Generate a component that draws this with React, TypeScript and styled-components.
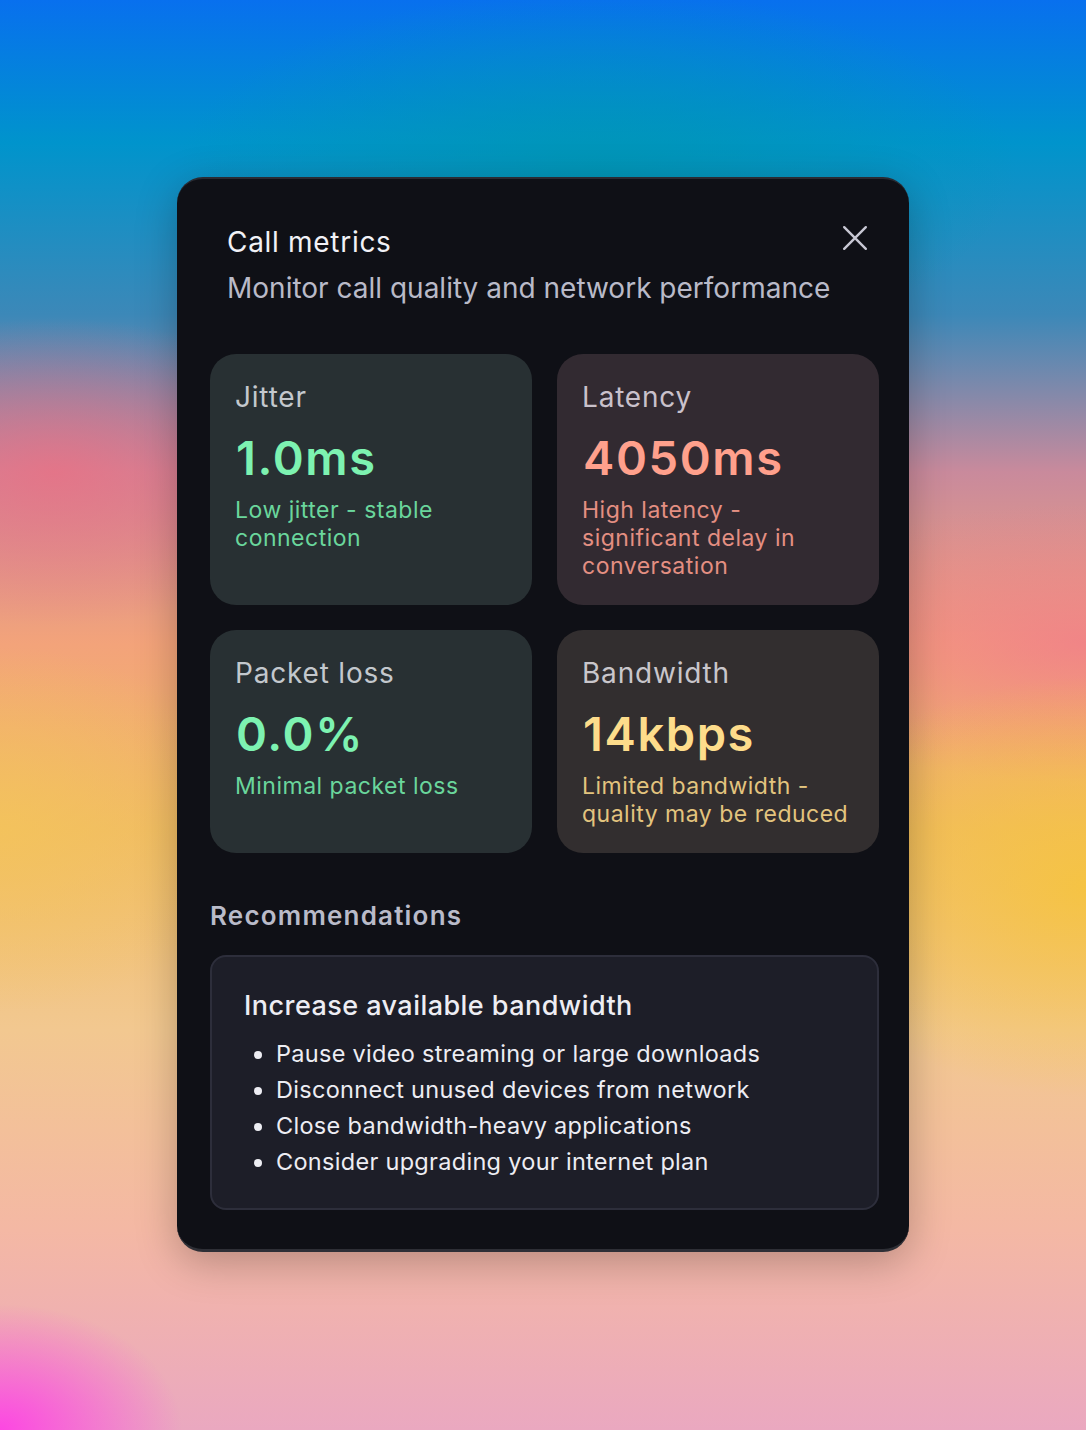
import styled, { createGlobalStyle } from "styled-components"

const GlobalStyle = createGlobalStyle`
    html, body {
        margin: 0;
        padding: 0;
    }
    body {
        font-family: Inter, "Noto Sans", "Liberation Sans", sans-serif;
        -webkit-font-smoothing: antialiased;
    }
`

type Tone = 'good' | 'bad' | 'warn'

const tones: Record<Tone, { bg: string, value: string, text: string, label: string }> = {
    good: { bg: "#283033", value: "#7df2b1", text: "#6ad69c", label: "#c3c8cd" },
    bad: { bg: "#322a31", value: "#ffa08c", text: "#e48f82", label: "#c9c1cb" },
    warn: { bg: "#322e2f", value: "#fddc8b", text: "#e3c47e", label: "#c9c6cb" },
}

const Backdrop = styled.div`
    width: 1086px;
    height: 1430px;
    display: flex;
    align-items: flex-start;
    justify-content: center;
    padding-top: 177px;
    box-sizing: border-box;
    background:
        radial-gradient(ellipse 260px 180px at 0% 100%, rgba(255, 60, 230, 0.9), transparent 70%),
        radial-gradient(ellipse 420px 300px at 100% 62%, rgba(246, 196, 60, 0.85), transparent 70%),
        radial-gradient(ellipse 360px 260px at 0% 58%, rgba(244, 196, 90, 0.8), transparent 70%),
        radial-gradient(ellipse 400px 220px at 5% 33%, rgba(236, 110, 130, 0.75), transparent 70%),
        radial-gradient(ellipse 500px 200px at 100% 45%, rgba(240, 120, 140, 0.7), transparent 70%),
        radial-gradient(ellipse 600px 260px at 55% 12%, rgba(0, 150, 180, 0.85), transparent 70%),
        linear-gradient(180deg, #0870ee 0%, #0094cc 10%, #3c88b8 22%, #c98a9c 33%, #f3a37a 45%, #f0bb66 58%, #f2c890 72%, #f4b8a4 86%, #eaa8c0 100%);
`

const Dialog = styled.div`
    width: 732px;
    background: #0f1016;
    border-radius: 26px;
    border-top: 2px solid #2a2b33;
    border-bottom: 3px solid #2e2f36;
    box-shadow: 0 10px 40px rgba(0, 0, 0, 0.25);
    padding: 0 30px 39px 33px;
    box-sizing: border-box;
    display: flex;
    flex-direction: column;
`

const Header = styled.div`
    display: flex;
    justify-content: space-between;
    align-items: flex-start;
    padding: 44px 0 0 17px;
    height: 175px;
    box-sizing: border-box;
`

const HeaderText = styled.div`
    display: flex;
    flex-direction: column;
    gap: 8px;
`

const Title = styled.h2`
    margin: 0;
    font-size: 28px;
    line-height: 38px;
    font-weight: 400;
    letter-spacing: 0.7px;
    color: #f1f1f6;
`

const Subtitle = styled.p`
    margin: 0;
    font-size: 28px;
    line-height: 38px;
    font-weight: 400;
    color: #b9bac8;
`

const CloseButton = styled.button`
    background: none;
    border: none;
    padding: 0;
    margin: 0 9px 0 0;
    width: 30px;
    height: 30px;
    color: #c8c8d4;
    display: flex;
    align-items: center;
    justify-content: center;
    cursor: pointer;
`

const Grid = styled.div`
    display: grid;
    grid-template-columns: 322px 322px;
    column-gap: 25px;
    row-gap: 25px;
`

const Card = styled.div<{ tone: Tone }>`
    background: ${p => tones[p.tone].bg};
    border-radius: 26px;
    padding: 25px 24px 24px 25px;
    display: flex;
    flex-direction: column;
    min-height: 251px;
    box-sizing: border-box;
    &:nth-child(n+3) {
        min-height: 223px;
    }
`

const Label = styled.div<{ tone: Tone }>`
    font-size: 28px;
    line-height: 36px;
    letter-spacing: 0.8px;
    color: ${p => tones[p.tone].label};
`

const Value = styled.div<{ tone: Tone }>`
    margin-top: 15px;
    font-size: 47px;
    line-height: 56px;
    font-weight: 600;
    letter-spacing: 1.6px;
    padding-left: 1px;
    color: ${p => tones[p.tone].value};
`

const Desc = styled.div<{ tone: Tone }>`
    margin-top: 10px;
    font-size: 23px;
    line-height: 28px;
    letter-spacing: 0.5px;
    color: ${p => tones[p.tone].text};
`

const SectionTitle = styled.h3`
    margin: 46px 0 22px 0;
    font-size: 26px;
    line-height: 34px;
    font-weight: 600;
    letter-spacing: 1.2px;
    color: #b9bbc9;
`

const RecBox = styled.div`
    background: #1d1e28;
    border: 2px solid #2d2e3b;
    border-radius: 16px;
    padding: 31px 32px 28px 32px;
`

const RecTitle = styled.div`
    font-size: 27px;
    line-height: 36px;
    font-weight: 500;
    letter-spacing: 0.45px;
    color: #ededf3;
    margin-bottom: 12px;
`

const List = styled.ul`
    margin: 0;
    padding: 0 0 0 32px;
    list-style: disc;
`

const Item = styled.li`
    font-size: 23.5px;
    line-height: 36px;
    letter-spacing: 0.3px;
    color: #ededf3;
`

const metrics: { label: string, value: string, desc: string, tone: Tone }[] = [
    { label: "Jitter", value: "1.0ms", desc: "Low jitter - stable connection", tone: "good" },
    { label: "Latency", value: "4050ms", desc: "High latency - significant delay in conversation", tone: "bad" },
    { label: "Packet loss", value: "0.0%", desc: "Minimal packet loss", tone: "good" },
    { label: "Bandwidth", value: "14kbps", desc: "Limited bandwidth - quality may be reduced", tone: "warn" },
]

const tips = [
    "Pause video streaming or large downloads",
    "Disconnect unused devices from network",
    "Close bandwidth-heavy applications",
    "Consider upgrading your internet plan",
]

export default function App(): JSX.Element {
    return (
        <>
            <GlobalStyle />
            <Backdrop>
                <Dialog>
                    <Header>
                        <HeaderText>
                            <Title>Call metrics</Title>
                            <Subtitle>Monitor call quality and network performance</Subtitle>
                        </HeaderText>
                        <CloseButton aria-label="Close">
                            <svg width="26" height="26" viewBox="0 0 24 24" fill="none" stroke="currentColor" strokeWidth="2.2" strokeLinecap="round">
                                <path d="M2 2L22 22M22 2L2 22" />
                            </svg>
                        </CloseButton>
                    </Header>

                    <Grid>
                        {metrics.map(m => (
                            <Card key={m.label} tone={m.tone}>
                                <Label tone={m.tone}>{m.label}</Label>
                                <Value tone={m.tone}>{m.value}</Value>
                                <Desc tone={m.tone}>{m.desc}</Desc>
                            </Card>
                        ))}
                    </Grid>

                    <SectionTitle>Recommendations</SectionTitle>
                    <RecBox>
                        <RecTitle>Increase available bandwidth</RecTitle>
                        <List>
                            {tips.map(t => <Item key={t}>{t}</Item>)}
                        </List>
                    </RecBox>
                </Dialog>
            </Backdrop>
        </>
    )
}
